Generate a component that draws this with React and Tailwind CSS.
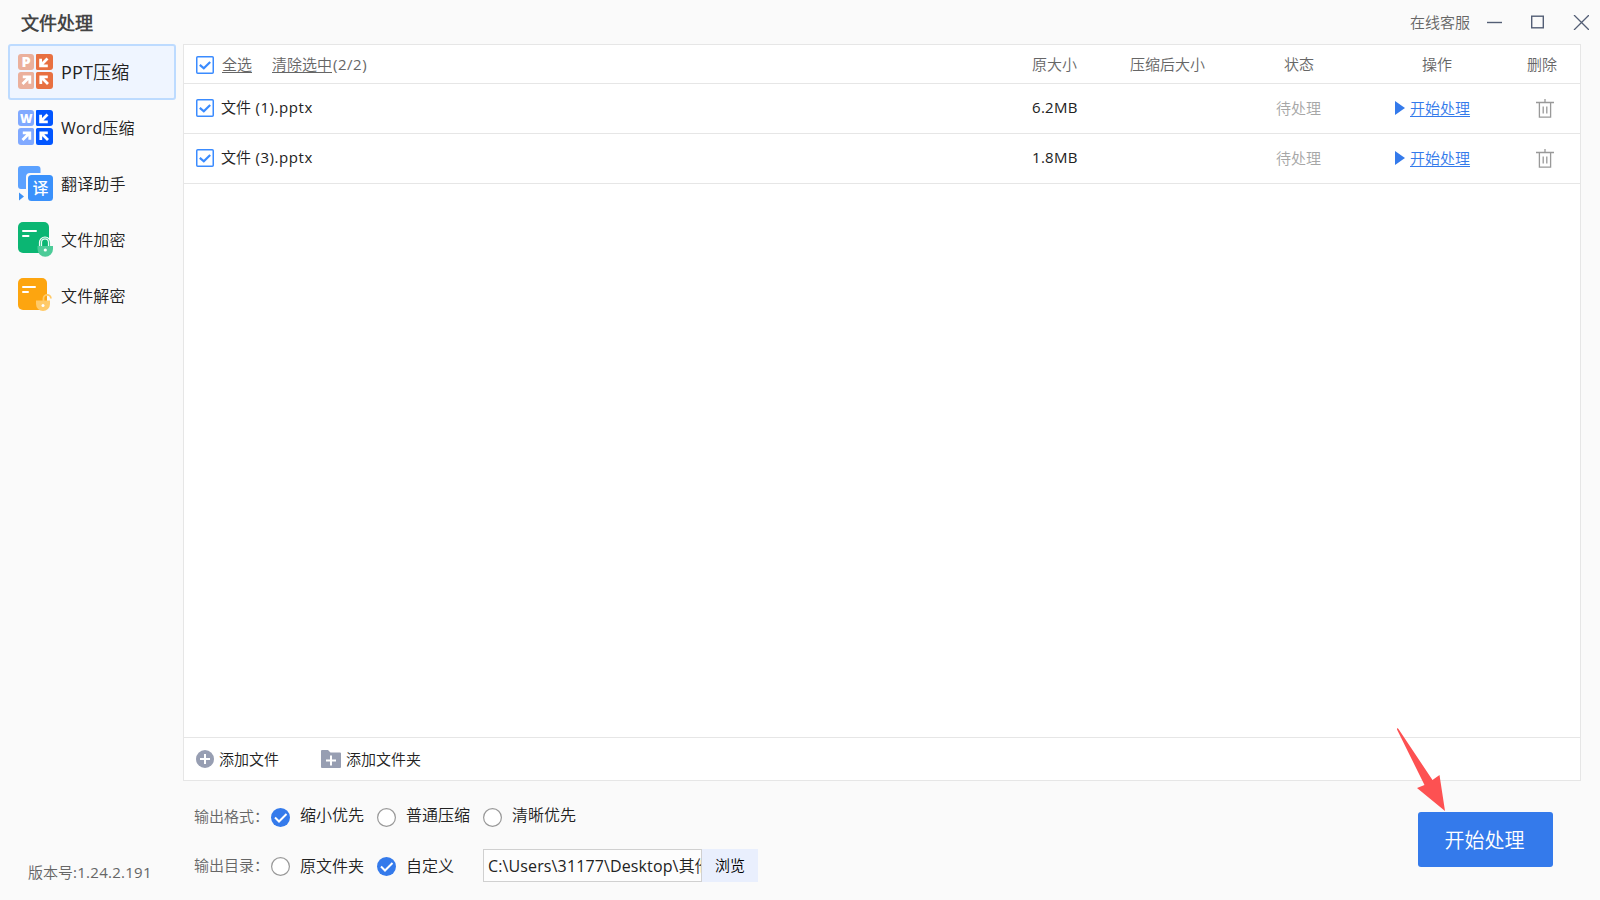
import React from "react";

const navItems = [
  { label: "PPT压缩", Icon: PptIcon, active: true },
  { label: "Word压缩", Icon: WordIcon },
  { label: "翻译助手", Icon: TranslateIcon },
  { label: "文件加密", Icon: EncryptIcon },
  { label: "文件解密", Icon: DecryptIcon },
];

const files = [
  { name: "文件", suffix: " (1).pptx", size: "6.2MB", status: "待处理" },
  { name: "文件", suffix: " (3).pptx", size: "1.8MB", status: "待处理" },
];

// Four tiles with arrows pointing to the middle
const CompressIcon = ({ letter, light, dark }) => (
  <svg className="overflow-visible" width="35" height="35" viewBox="0 0 35 35">
    <path d="M3 0H13a3 3 0 0 1 3 3V13a3 3 0 0 1-3 3H3a3 3 0 0 1-3-3V3a3 3 0 0 1 3-3Z" fill={light} />
    <path d="M19 0H32a3 3 0 0 1 3 3V13a3 3 0 0 1-3 3H19.500a1.500 1.500 0 0 1-1.500-1.500V1a1 1 0 0 1 1-1Z" fill={dark} />
    <path d="M3 18H14.500a1.500 1.500 0 0 1 1.500 1.500V33a2 2 0 0 1-2 2H3a3 3 0 0 1-3-3V21a3 3 0 0 1 3-3Z" fill={light} />
    <path d="M19.500 18H32a3 3 0 0 1 3 3V32a3 3 0 0 1-3 3H20a2 2 0 0 1-2-2V19.500a1.500 1.500 0 0 1 1.500-1.500Z" fill={dark} />
    <text
      x="8.2"
      y="12.5"
      textAnchor="middle"
      fontFamily="Open Sans"
      fontWeight="800"
      fontSize={letter === "P" ? 14.5 : 12}
      fill="#fff"
    >
      {letter}
    </text>
    <g stroke="#fff" strokeWidth="2.8" fill="none">
      <path d="M29.500 4.500L23.500 10.500M22.600 4.800V11.800H29.800" />
      <path d="M4.500 30L10.500 24M4.800 22.800H11.800V29.800" />
      <path d="M30 30L23.500 23.500M22.800 30V22.800H29.800" />
    </g>
  </svg>
);

function PptIcon() {
  return <CompressIcon letter="P" light="#ebb09c" dark="#e87041" />;
}

function WordIcon() {
  return <CompressIcon letter="W" light="#80a9ff" dark="#0256ff" />;
}

function TranslateIcon() {
  return (
    <svg width="35" height="35" viewBox="0 0 35 35">
      <path d="M3 0H19.500a3 3 0 0 1 3 3V7H12a4 4 0 0 0-4 4V23H3a3 3 0 0 1-3-3V3a3 3 0 0 1 3-3Z" fill="#5ba1ff" />
      <path d="M1 26.500L6 30.500L1 34.500Z" fill="#3d91f5" />
      <rect x="10" y="9" width="25" height="26" rx="3.500" fill="#3a91fb" />
      <text x="22.500" y="28" textAnchor="middle" fontFamily="Noto Sans CJK SC" fontWeight="500" fontSize="16" fill="#fff">
        译
      </text>
    </svg>
  );
}

function EncryptIcon() {
  return (
    <svg width="35" height="35" viewBox="0 0 35 35">
      <rect width="31" height="31" rx="5" fill="#0bb673" />
      <path d="M5 9H18M5 14H10.500" stroke="#fff" strokeWidth="2" strokeLinecap="round" />
      <path d="M22.500 24V20.500a4.500 4.500 0 0 1 9 0V24" fill="none" stroke="#fff" strokeWidth="3.200" />
      <path d="M22.500 24V20.500a4.500 4.500 0 0 1 9 0V24" fill="none" stroke="#4ccb98" strokeWidth="1.200" />
      <path d="M19.500 24H35V27a7.750 7.750 0 0 1-15.500 0Z" fill="#4ccb98" />
      <circle cx="27.300" cy="28" r="1.600" fill="#fff" />
    </svg>
  );
}

function DecryptIcon() {
  return (
    <svg width="35" height="35" viewBox="0 0 35 35">
      <rect width="29" height="32" rx="5" fill="#fda50f" />
      <path d="M5 9H17M5 14H10" stroke="#fff" strokeWidth="2" strokeLinecap="round" />
      <path d="M25.500 23V20.500a3.700 3.700 0 0 1 7.400 0" fill="none" stroke="#ffca68" strokeWidth="1.800" />
      <path d="M18 22.500H32V26a7 7 0 0 1-14 0Z" fill="#ffca68" />
      <circle cx="25" cy="27.500" r="1.500" fill="#fff" />
    </svg>
  );
}

const Checkbox = () => (
  <svg className="shrink-0" width="18" height="18" viewBox="0 0 18 18" fill="none">
    <rect x="0.75" y="0.75" width="16.5" height="16.5" rx="1" fill="#fff" stroke="#3a8bff" strokeWidth="1.5" />
    <path d="M3.800 8.800L7.800 12.300L14.200 6" stroke="#3a8bff" strokeWidth="2.200" />
  </svg>
);

const Radio = ({ checked }) => (
  <svg className="shrink-0" width="19" height="19" viewBox="0 0 19 19" fill="none">
    {checked ? (
      <>
        <circle cx="9.500" cy="9.500" r="9.500" fill="#347aeb" />
        <path d="M4 9.500L8 13.500L15.500 6" stroke="#fff" strokeWidth="2" />
      </>
    ) : (
      <circle cx="9.500" cy="9.500" r="8.900" fill="#fff" stroke="#999" strokeWidth="1.200" />
    )}
  </svg>
);

const TrashIcon = () => (
  <svg width="18" height="19" viewBox="0 0 18 19" fill="none" stroke="#999" strokeWidth="1.300">
    <path d="M0 3.500H18M9 0V3M3.400 4V18.200H14.600V4M7.200 7.500V14.500M10.800 7.500V14.500" />
  </svg>
);

const Option = ({ label, checked, className = "", labelClass = "" }) => (
  <div className={`flex items-center ${className}`}>
    <Radio checked={checked} />
    <span className={`ml-[10px] text-base leading-5 text-[#222] ${labelClass}`}>{label}</span>
  </div>
);

const columns = "grid grid-cols-[826px_130px_90px_139px_124px_87px]";

export default function App() {
  return (
    <div className="relative flex h-[900px] w-[1600px] flex-col overflow-hidden bg-[#fafafa] font-['Open_Sans','Noto_Sans_CJK_SC_DemiLight','Noto_Sans_CJK_SC',sans-serif] text-[15px] leading-5 text-[#222]">
      {/* Title bar */}
      <header className="flex h-11 shrink-0 items-center pl-[21px] pr-[11px]">
        <h1 className="pt-px text-lg leading-5 font-bold text-[#444]">文件处理</h1>
        <span className="ml-auto text-[#666]">在线客服</span>
        <svg className="ml-[17px]" width="102" height="15" viewBox="0 0 102 15" fill="none" stroke="#535e75">
          <path d="M0 7.500H15" strokeWidth="1.400" />
          <rect x="44.700" y="1.200" width="11.600" height="11.600" strokeWidth="1.400" />
          <path d="M87 0L102 15M102 0L87 15" strokeWidth="1.300" />
        </svg>
      </header>

      <div className="flex flex-1">
        {/* Sidebar */}
        <aside className="flex w-[183px] shrink-0 flex-col pl-2">
          <nav className="w-[168px]">
            {navItems.map(({ label, Icon, active }) => (
              <div
                key={label}
                className={`flex h-14 items-start rounded-[3px] border-2 pt-2 pl-2 ${
                  active ? "border-[#bddbff] bg-[#eff5ff] text-lg" : "border-transparent text-base"
                }`}
              >
                <Icon />
                <span className={`mt-2 ml-2 leading-5 ${active ? "tracking-[0.01em]" : "tracking-[0.01em]"}`}>
                  {label}
                </span>
              </div>
            ))}
          </nav>
          <p className="mt-auto mb-[18px] ml-5 text-[#666]">
            版本号<span className="tracking-[0.018em]">:1.24.2.191</span>
          </p>
        </aside>

        <main className="flex flex-1 flex-col pr-[19px]">
          {/* File list */}
          <section className="flex h-[737px] w-[1398px] flex-col border border-[#e6e6e6] bg-white">
            <div className={`${columns} h-[39px] items-center border-b border-[#e6e6e6] text-[#666]`}>
              <div className="flex items-center pl-3">
                <div className="pt-px">
                  <Checkbox />
                </div>
                <span className="ml-2 underline underline-offset-2">全选</span>
                <span className="ml-5 underline underline-offset-2">清除选中</span>
                <span className="ml-px tracking-[0.035em]">(2/2)</span>
              </div>
              <span className="pl-[22px]">原大小</span>
              <span className="-ml-[10px] whitespace-nowrap">压缩后大小</span>
              <span className="pl-[54px]">状态</span>
              <span className="pl-[53px]">操作</span>
              <span className="pl-[34px]">删除</span>
            </div>
            {files.map((file) => (
              <div key={file.suffix} className={`${columns} h-[50px] items-center border-b border-[#e6e6e6] pb-px`}>
                <div className="flex items-center pl-3">
                  <Checkbox />
                  <span className="ml-[7px] pb-0.5 whitespace-pre">
                    {file.name}
                    <span className="tracking-[0.037em]">{file.suffix}</span>
                  </span>
                </div>
                <span className="pb-0.5 pl-[22px] tracking-[0.02em]">{file.size}</span>
                <span />
                <span className="pl-[46px] text-[#a6a6a6]">{file.status}</span>
                <div className="flex items-center pl-[26px] text-[#347aeb]">
                  <svg width="10" height="14" viewBox="0 0 10 14">
                    <path d="M0 0L10 7L0 14Z" fill="currentColor" />
                  </svg>
                  <span className="ml-[5px] whitespace-nowrap underline underline-offset-2">开始处理</span>
                </div>
                <div className="pl-[43px]">
                  <TrashIcon />
                </div>
              </div>
            ))}
            <div className="mt-auto flex h-[43px] items-center border-t border-[#e6e6e6] pl-3">
              <svg width="18" height="18" viewBox="0 0 18 18">
                <circle cx="9" cy="9" r="9" fill="#979eb2" />
                <path d="M9 4V14M4 9H14" stroke="#fff" strokeWidth="2" />
              </svg>
              <span className="ml-[5px]">添加文件</span>
              <svg className="ml-[42px]" width="20" height="18" viewBox="0 0 20 18">
                <path d="M0 1a1 1 0 0 1 1-1H7L9.500 2.500H19a1 1 0 0 1 1 1V17a1 1 0 0 1-1 1H1a1 1 0 0 1-1-1Z" fill="#979eb2" />
                <path d="M10 5.500V15.500M5 10.500H15" stroke="#fff" strokeWidth="2" />
              </svg>
              <span className="ml-[5px]">添加文件夹</span>
            </div>
          </section>

          {/* Output settings */}
          <div className="flex flex-1">
            <div className="flex flex-col pl-[11px]">
              <div className="mt-[26px] flex h-5 items-center">
                <span className="w-[77px] pb-0.5 whitespace-nowrap text-[#666]">输出格式：</span>
                <Option label="缩小优先" checked className="w-[106px]" labelClass="-mt-1" />
                <Option label="普通压缩" className="w-[106px]" labelClass="-mt-1" />
                <Option label="清晰优先" labelClass="-mt-1" />
              </div>
              <div className="mt-[22px] flex h-[33px] items-center">
                <span className="w-[77px] pb-0.5 whitespace-nowrap text-[#666]">输出目录：</span>
                <Option label="原文件夹" className="w-[106px] pt-px" />
                <Option label="自定义" checked className="w-[106px] pt-px" />
                <div className="h-[33px] w-[219px] overflow-hidden border border-[#d0d0d0] bg-[#fdfdfd] pl-1 text-base leading-[33px] whitespace-nowrap">
                  <span className="tracking-[0.008em]">C:\Users\31177\Desktop\</span>其他
                </div>
                <button className="h-[33px] w-14 bg-[#e9effd] pb-px text-[15px] text-black">浏览</button>
              </div>
            </div>
            <button className="mt-[31px] mr-7 ml-auto h-[55px] w-[135px] rounded-[3px] bg-[#347aeb] pt-0.5 pr-0.5 text-xl text-white">
              开始处理
            </button>
          </div>
        </main>
      </div>

      {/* Pointer to the start button */}
      <svg className="absolute top-[728px] left-[1396px]" width="50" height="84" viewBox="0 0 50 84">
        <path d="M1 0L2.500 1L36.500 52L43.500 47L49 83L21 60L28.500 57L1 1.500Z" fill="#fd5152" />
      </svg>
    </div>
  );
}
